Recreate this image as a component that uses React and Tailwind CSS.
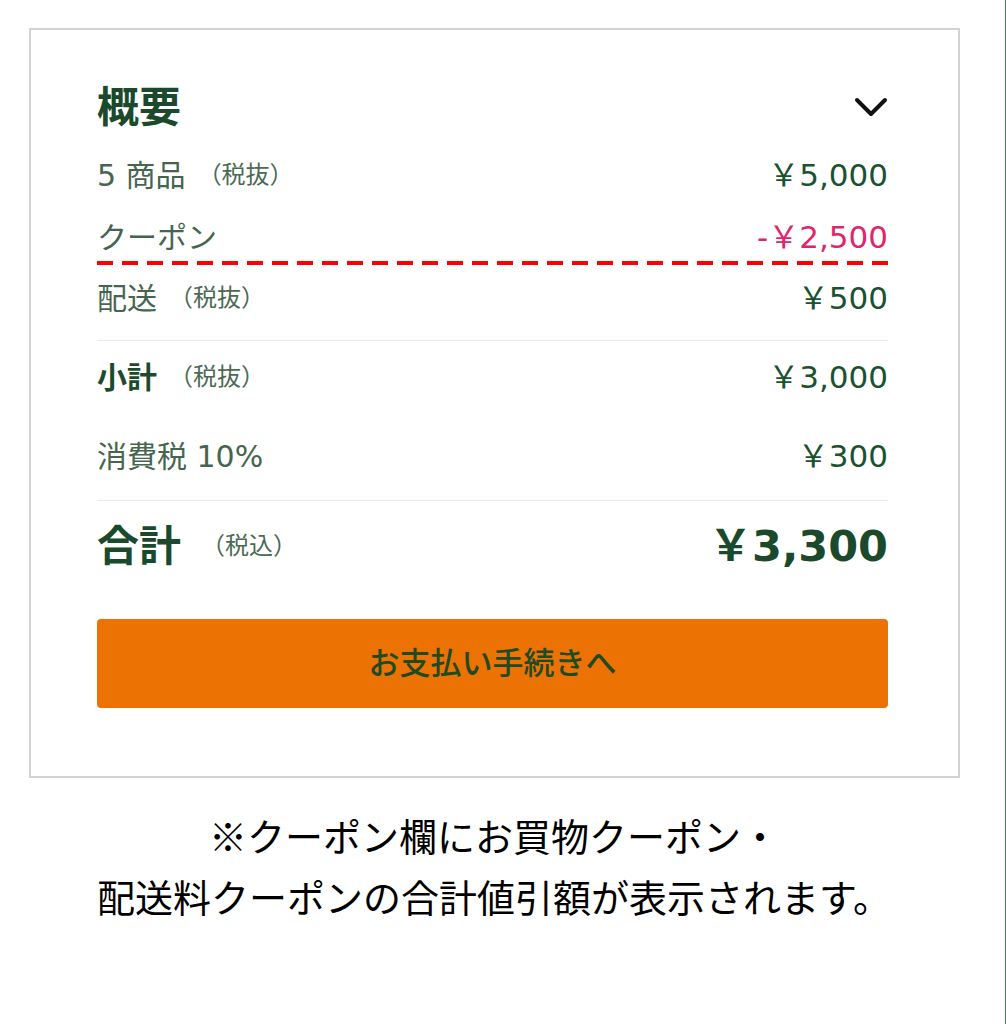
const cjk = "font-['DejaVu_Sans','Noto_Sans_CJK_JP',sans-serif]";

function Chevron() {
  return (
    <svg width="34" height="24" viewBox="0 0 34 24" fill="none">
      <polyline
        points="3,5 17,19 31,5"
        stroke="#111"
        strokeWidth="4"
        strokeLinecap="round"
        strokeLinejoin="round"
      />
    </svg>
  );
}

function Tax({ children }) {
  return <span className="ml-3 text-[24px] font-normal text-[#4b6a55]">{children}</span>;
}

function Row({ h, label, value, bold, valueClass = "text-[#1a5230]" }) {
  return (
    <div className={`flex items-center justify-between ${h}`}>
      <div className={`flex items-center text-[30px] ${bold ? "font-bold text-[#1d4a2c]" : "text-[#46654f]"}`}>
        {label}
      </div>
      <div className={`text-[31px] ${valueClass}`}>{value}</div>
    </div>
  );
}

export default function App() {
  return (
    <div className={`min-h-screen w-[1006px] border-r border-[#3b8a5e] bg-white pt-[28px] ${cjk}`}>
      <section className="ml-[29px] w-[931px] border-2 border-[#d3d3d3] pl-[66px] pr-[70px] pt-[47px] pb-[68px]">
        <div className="flex h-[60px] items-center justify-between">
          <h2 className="text-[42px] font-bold text-[#1a4a2b]">概要</h2>
          <Chevron />
        </div>

        <Row h="h-[76px]" label={<>5 商品<Tax>（税抜）</Tax></>} value="￥5,000" />
        <Row
          h="h-[48px]"
          label="クーポン"
          value="-￥2,500"
          valueClass="text-[#e0266a]"
        />
        <div className="h-[4px] bg-[repeating-linear-gradient(90deg,#ff0000_0_16px,transparent_16px_25px)]" />
        <Row h="h-[66px]" label={<>配送<Tax>（税抜）</Tax></>} value="￥500" />
        <div className="mt-[9px] border-t border-[#ebebeb]" />

        <Row h="h-[72px]" bold label={<>小計<Tax>（税抜）</Tax></>} value="￥3,000" />
        <Row h="h-[87px]" label="消費税 10%" value="￥300" />
        <div className="border-t border-[#ebebeb]" />

        <div className="flex h-[90px] items-center justify-between">
          <div className="flex items-center text-[42px] font-bold text-[#1a4a2b]">
            合計
            <span className="ml-5 text-[24px] font-normal text-[#4b6a55]">（税込）</span>
          </div>
          <div className="text-[43px] font-bold text-[#1a4a2b]">￥3,300</div>
        </div>

        <button
          type="button"
          className="mt-[28px] flex h-[89px] w-full items-center justify-center rounded-[4px] bg-[#ec7204] text-[31px] font-medium text-[#1f4a22]"
        >
          お支払い手続きへ
        </button>
      </section>

      <p className="mt-[26px] ml-[38px] w-[912px] text-center font-['Noto_Sans_CJK_JP',sans-serif] text-[38px] leading-[61px] text-black">
        ※クーポン欄にお買物クーポン・
        <br />
        配送料クーポンの合計値引額が表示されます。
      </p>
    </div>
  );
}
